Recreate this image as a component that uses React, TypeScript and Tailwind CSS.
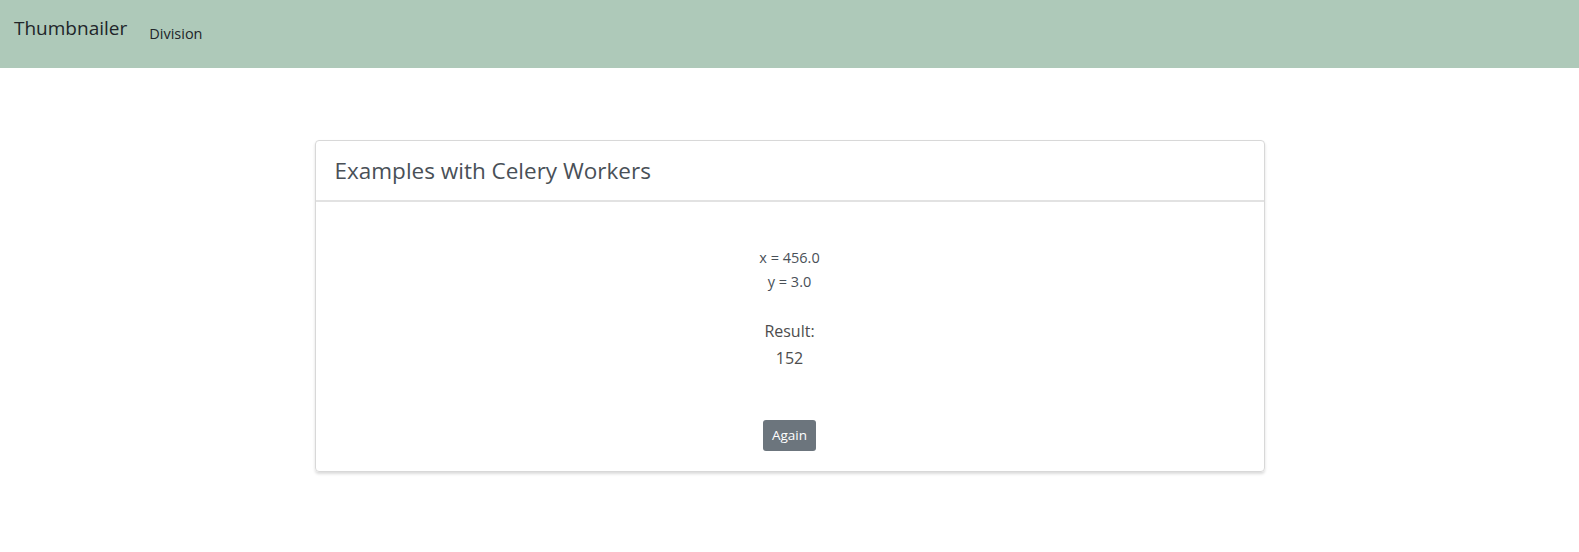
const App = () => {
  return (
    <div className="min-h-[552px] bg-white font-['Open_Sans',sans-serif] text-[#495057]">
      <nav className="flex h-[68px] items-start bg-[#aec9b9] pl-[14px]">
        <span className="mt-[14px] text-[19px] leading-[28px] text-[#212529]">Thumbnailer</span>
        <span className="ml-[22px] mt-[23px] text-[14.5px] leading-[22px] text-[#212529]">Division</span>
      </nav>

      <div className="mx-auto mt-[72px] w-[950px] rounded-[4px] border border-[#d8d8d8] shadow-[0_2px_3px_rgba(0,0,0,0.14)]">
        <div className="flex h-[61px] items-center border-b-2 border-[#e2e2e2] px-[19px]">
          <h4 className="text-[22.5px] leading-[28px] text-[#495057]">Examples with Celery Workers</h4>
        </div>
        <div className="flex flex-col items-center pb-[20px] pt-[44px]">
          <div className="text-center text-[14.5px] leading-[24px]">
            <div>x = 456.0</div>
            <div>y = 3.0</div>
          </div>
          <div className="mt-[24px] text-center text-[16px] leading-[27px] text-[#4d4d4d]">
            <div>Result:</div>
            <div>152</div>
          </div>
          <button className="mt-[48px] h-[31px] rounded-[3px] bg-[#6c757d] px-[9px] text-[13.5px] text-white">
            Again
          </button>
        </div>
      </div>
    </div>
  )
}

export default App
